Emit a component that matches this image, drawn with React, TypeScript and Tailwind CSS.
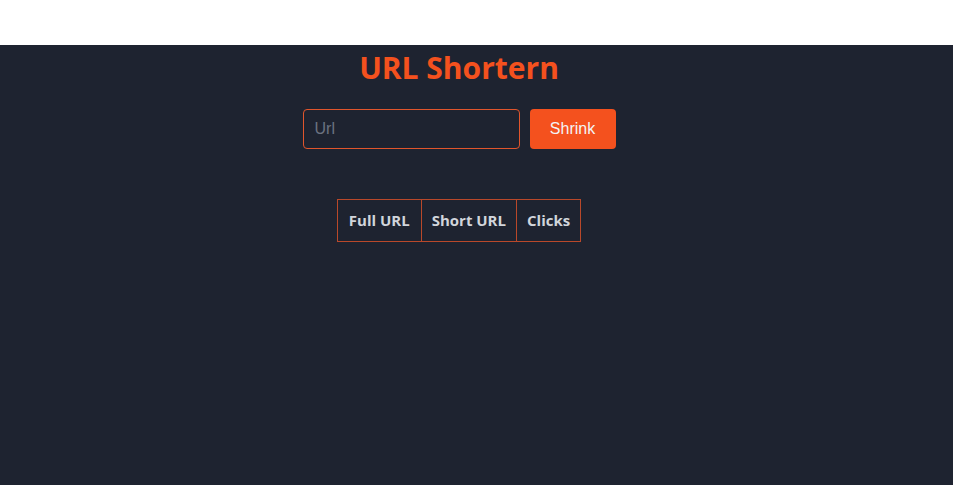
export default function App() {
  return (
    <div className="min-h-screen bg-white pt-[45px]">
      <div className="flex min-h-[440px] w-full justify-start bg-[#1e2330]">
        <div className="flex w-[918px] flex-col items-center font-['Open_Sans',sans-serif]">
          <h1 className="mt-[1px] text-[30px] leading-[44px] font-bold text-[#f4511e]">URL Shortern</h1>
          <form className="mt-[19px] flex gap-[10px]" onSubmit={(e) => e.preventDefault()}>
            <input
              placeholder="Url"
              className="h-[40px] w-[217px] rounded-[4px] border border-[#e0552c] bg-transparent px-[11px] font-['Liberation_Sans',sans-serif] text-[16px] text-gray-200 placeholder:text-[#6b7280] outline-none"
            />
            <button className="h-[40px] w-[86px] rounded-[4px] bg-[#f4511e] font-['Liberation_Sans',sans-serif] text-[16px] text-[#f3f4f6]">
              Shrink
            </button>
          </form>
          <div className="mt-[50px] flex h-[43px] border border-[#b9482a] text-[15px] font-bold text-[#d1d5db]">
            <div className="flex items-center border-r border-[#b9482a] px-[11px]">Full URL</div>
            <div className="flex items-center border-r border-[#b9482a] px-[10px]">Short URL</div>
            <div className="flex items-center px-[10px]">Clicks</div>
          </div>
        </div>
      </div>
    </div>
  );
}
